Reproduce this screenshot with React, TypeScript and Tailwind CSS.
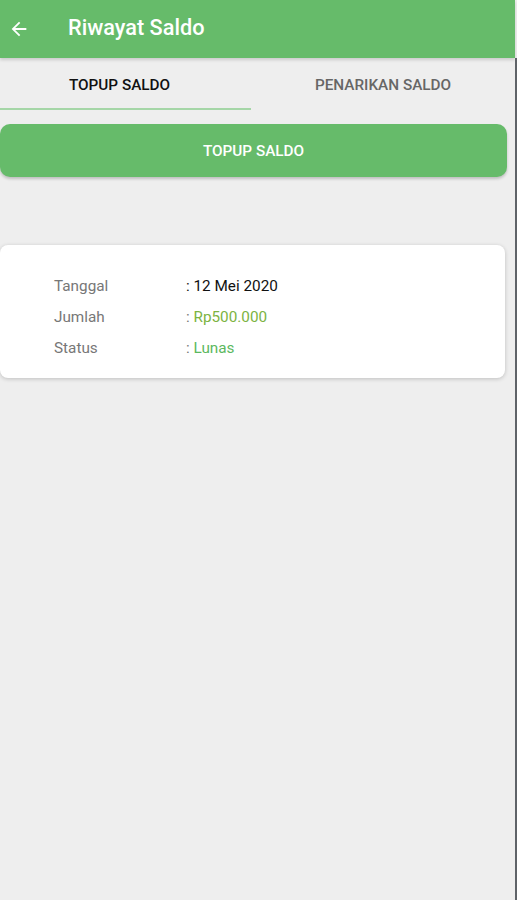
import React, { useState } from 'react';

const App: React.FC = () => {
  const [tab, setTab] = useState<'topup' | 'tarik'>('topup');

  return (
    <div className="flex min-h-[900px] w-[517px] bg-[#eeeeee] font-['Roboto',sans-serif]">
      <div className="flex-1 flex flex-col">
        {/* App bar */}
        <div className="h-[58px] bg-[#66bb6a] flex items-center shadow-[0_2px_3px_rgba(0,0,0,0.15)]">
          <svg viewBox="0 0 24 24" className="w-[22px] h-[22px] ml-[8px] text-white" fill="currentColor">
            <path d="M20 11H7.83l5.59-5.59L12 4l-8 8 8 8 1.41-1.41L7.83 13H20v-2z" />
          </svg>
          <h1 className="ml-[38px] mb-[2px] text-white text-[21.7px] font-medium">Riwayat Saldo</h1>
        </div>

        {/* Tabs */}
        <div className="flex h-[52px]">
          <button
            onClick={() => setTab('topup')}
            className={`w-[251px] pr-[12px] pt-[5px] flex items-center justify-center text-[15.3px] font-medium border-b-2 ${tab === 'topup' ? 'text-[#111111] border-[#a5d6a7]' : 'text-[#666666] border-transparent'}`}
          >
            TOPUP SALDO
          </button>
          <button
            onClick={() => setTab('tarik')}
            className={`flex-1 pt-[5px] flex items-center justify-center text-[15.3px] font-medium border-b-2 ${tab === 'tarik' ? 'text-[#111111] border-[#a5d6a7]' : 'text-[#666666] border-transparent'}`}
          >
            PENARIKAN SALDO
          </button>
        </div>

        {/* Topup button */}
        <div className="pt-[14px] pr-[8px]">
          <button className="w-full h-[53px] pt-[2px] rounded-[10px] bg-[#66bb6a] text-white text-[15.3px] font-medium shadow-[0_2px_3px_rgba(0,0,0,0.2)]">
            TOPUP SALDO
          </button>
        </div>

        {/* History card */}
        <div className="mt-[68px] mr-[10px] bg-white rounded-[8px] shadow-[0_1px_4px_rgba(0,0,0,0.2)] pl-[54px] pt-[31px] pb-[20px] text-[15.3px]">
          <div className="grid grid-cols-[132px_1fr] gap-y-[11px] leading-[20px]">
            <span className="text-[#777777]">Tanggal</span>
            <span className="text-[#111111]">: 12 Mei 2020</span>
            <span className="text-[#777777]">Jumlah</span>
            <span className="text-[#7cb342]"><span className="text-[#777777]">: </span>Rp500.000</span>
            <span className="text-[#777777]">Status</span>
            <span className="text-[#5cb860]"><span className="text-[#777777]">: </span>Lunas</span>
          </div>
        </div>
      </div>
      <div className="w-[2px] bg-[#5f6368] mt-[58px]" />
    </div>
  );
};

export default App;
